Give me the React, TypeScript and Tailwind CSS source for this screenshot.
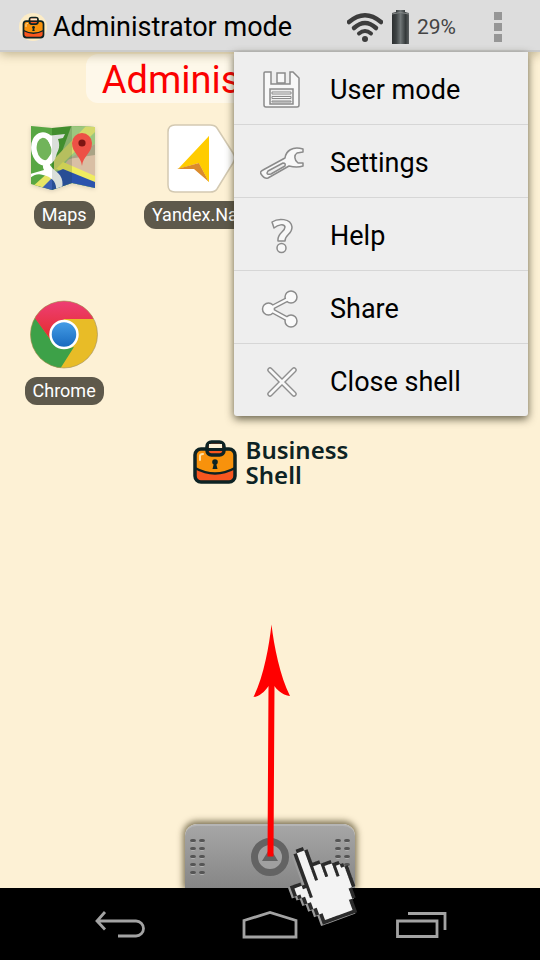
import React from "react";

const menuItems = [
  { label: "User mode", icon: <SaveIcon /> },
  { label: "Settings", icon: <WrenchIcon /> },
  { label: "Help", icon: <HelpIcon /> },
  { label: "Share", icon: <ShareIcon /> },
  { label: "Close shell", icon: <CloseIcon /> },
];

// # outline, o fill
const handPixels = [
  "     ##          ",
  "    #oo#         ",
  "    #oo#         ",
  "    #oo#         ",
  "    #oo#         ",
  "    #oo###       ",
  "    #oo#oo###    ",
  "    #oo#oo#oo##  ",
  "    #oo#oo#oo#o# ",
  "### #oo#oo#oo#oo#",
  "#oo##oooooooo#oo#",
  "#ooo#ooooooooooo#",
  " #oo#ooooooooooo#",
  "  #o#ooooooooooo#",
  "  #ooooooooooooo#",
  "   #ooooooooooo# ",
  "   #ooooooooooo# ",
  "    #oooooooooo# ",
  "    #ooooooooo#  ",
  "     #oooooooo#  ",
  "     #oooooooo#  ",
  "     ##########  ",
];

export default function App() {
  return (
    <div className="relative flex min-h-screen flex-col overflow-hidden bg-[#fdf1d5] font-['Roboto',sans-serif]">
      <Header />
      <main className="relative flex flex-1 flex-col">
        <h2 className="mx-auto mt-[2px] rounded-xl bg-white/50 px-4 pt-[3px] text-[38px] leading-[46px] whitespace-nowrap text-[#fb0000]">
          Administrator mode
        </h2>
        <div className="mt-[21px] grid grid-cols-4 gap-x-[9px] gap-y-[71px]">
          <Shortcut label="Maps" icon={<MapsIcon />} />
          <Shortcut label="Yandex.Navi" icon={<NaviIcon />} />
          <div className="col-span-2" />
          <Shortcut label="Chrome" icon={<ChromeIcon />} />
        </div>
        <div className="mt-8 flex items-center justify-center gap-2">
          <Briefcase className="h-[46px] w-[46px]" />
          <p className="font-['Noto_Sans',sans-serif] text-[24px] leading-[25px] font-semibold text-[#0d2324]">
            Business
            <br />
            Shell
          </p>
        </div>
        <Dock />
        <PopupMenu />
      </main>
      <NavBar />
      <SwipeHint />
    </div>
  );
}

function Header() {
  return (
    <header className="z-10 flex h-[52px] items-center border-b-2 border-[#cbcbcb] bg-[#dddddd] pt-1 pr-[38px] pl-[19px] shadow-[0_2px_10px_rgba(90,75,30,0.4)]">
      <span className="flex h-7 w-7 items-center justify-center rounded-full bg-[#fcecc6]">
        <Briefcase className="h-[23px] w-[23px]" />
      </span>
      <h1 className="ml-[6px] flex-1 text-[27px] leading-[32px] whitespace-nowrap text-black">
        Administrator mode
      </h1>
      <svg viewBox="0 0 36 30" className="h-[30px] w-9" fill="none" stroke="#3c3c3c">
        <path d="M2 10Q18-3.500 34 10" strokeWidth="4.500" strokeLinecap="round" />
        <path d="M7 16Q18 6 29 16" strokeWidth="4.500" strokeLinecap="round" />
        <path d="M12 21.500Q18 16.500 24 21.500" strokeWidth="4" strokeLinecap="round" />
        <circle cx="18" cy="27" r="3" fill="#3c3c3c" stroke="none" />
      </svg>
      <svg viewBox="0 0 19 34" className="ml-2 h-[34px] w-[19px]">
        <defs>
          <linearGradient id="battery">
            <stop offset="0" stopColor="#2c2f30" />
            <stop offset="0.250" stopColor="#3d4243" />
            <stop offset="0.500" stopColor="#707677" />
            <stop offset="0.800" stopColor="#34393a" />
            <stop offset="1" stopColor="#5c6061" />
          </linearGradient>
        </defs>
        <path d="M1 3L5 2V0H14V2L18 3V34H1Z" fill="url(#battery)" />
        <path d="M1 4Q9 1 18 4" stroke="#858989" fill="none" />
      </svg>
      <span className="ml-[7px] text-[21px] leading-6 text-[#444]">29%</span>
      <button aria-label="More options" className="ml-[38px] flex flex-col gap-[3px]">
        <span className="h-2 w-2 bg-[#969696]" />
        <span className="h-2 w-2 bg-[#969696]" />
        <span className="h-2 w-2 bg-[#969696]" />
      </button>
    </header>
  );
}

function PopupMenu() {
  return (
    <div className="absolute top-0 right-3 z-20 w-[294px] divide-y divide-[#d6d6d6] rounded-b-[3px] bg-[#eeeeee] shadow-[0_3px_9px_rgba(50,45,25,0.75)]">
      {menuItems.map((item) => (
        <button
          key={item.label}
          className="flex h-[73px] w-full items-center gap-[26px] pt-[3px] pl-[26px] text-left text-[27px] leading-8 text-black last:h-[72px]"
        >
          <span className="flex w-11 justify-center">{item.icon}</span>
          {item.label}
        </button>
      ))}
    </div>
  );
}

function Shortcut({ label, icon }: { label: string; icon: React.ReactNode }) {
  return (
    <button className="flex flex-col items-center gap-2">
      {icon}
      <span className="rounded-xl bg-[#5e594b] px-2 text-[18px] leading-7 whitespace-nowrap text-white">
        {label}
      </span>
    </button>
  );
}

function Dock() {
  return (
    <button
      aria-label="Open panel"
      className="mx-auto mt-auto flex h-[64px] w-[170px] items-center justify-between rounded-t-xl border-t-2 border-[#b5b5b5] bg-linear-to-b from-[#a6a6a6] to-[#868686] px-[5px] shadow-[0_-1px_6px_2px_rgba(60,50,20,0.65)]"
    >
      <Grip />
      <svg viewBox="0 0 40 40" className="h-10 w-10">
        <circle cx="20" cy="20" r="15.500" fill="#a0a0a0" stroke="#636363" strokeWidth="7" />
        <path d="M12 24L20 11L28 24Z" fill="#636363" />
      </svg>
      <Grip />
    </button>
  );
}

function Grip() {
  return (
    <span className="grid grid-cols-2 gap-x-[3px] gap-y-[4px]">
      {Array.from({ length: 10 }).map((_, i) => (
        <span key={i} className="h-[4px] w-[6px] rounded-xs border-b border-[#b0b0b0] bg-[#555]" />
      ))}
    </span>
  );
}

function NavBar() {
  return (
    <nav className="z-10 flex h-[72px] items-center justify-between bg-black px-[93px] pt-1">
      <button aria-label="Back">
        <svg viewBox="0 0 52 30" className="h-[30px] w-[52px]" fill="none" stroke="#a3a3a3" strokeWidth="2.800">
          <path d="M12 1L4 10L12 18.500M4 10H43A7.500 7.500 0 0 1 43 25H25" />
        </svg>
      </button>
      <button aria-label="Home">
        <svg viewBox="0 0 56 30" className="h-[30px] w-14" fill="none" stroke="#a3a3a3" strokeWidth="2.800">
          <path d="M2 9.500L28 1.500L54 9.500V26H2Z" />
        </svg>
      </button>
      <button aria-label="Recent apps">
        <svg viewBox="0 0 52 30" className="h-[30px] w-[52px]" fill="none" stroke="#a3a3a3" strokeWidth="2.800">
          <path d="M2.500 10H42V25.500H2.500ZM13 2.500H50V19" />
        </svg>
      </button>
    </nav>
  );
}

function SwipeHint() {
  return (
    <div className="pointer-events-none absolute inset-x-0 bottom-0 z-30 mx-auto h-[336px] w-[180px]">
      <svg viewBox="0 0 180 336" className="h-full w-full">
        <path d="M91.500 0.500C94 22 100 52 110 72C106 72 98 68 94.500 62L93.500 232.500H87.500L88.500 62C85 68 78 73 73.500 73C84 52 89 22 91.500 0.500Z" fill="#ff0000" />
        <g transform="translate(98.700 231.900) rotate(-20) scale(3.600)">
          <g transform="translate(-0.600 0.200)">
            <HandLayer chars="#o" fill="#9b9b9b" />
          </g>
          <HandLayer chars="o#" fill="#2b2b2b" />
          <HandLayer chars="o" fill="#f3f3f3" />
        </g>
      </svg>
    </div>
  );
}

function HandLayer({ chars, fill }: { chars: string; fill: string }) {
  let d = "";
  handPixels.forEach((row, y) => {
    row.split("").forEach((c, x) => {
      if (chars.includes(c)) d += `M${x} ${y}h1.150v1.150h-1.150z`;
    });
  });
  return <path d={d} fill={fill} />;
}

function Briefcase({ className }: { className: string }) {
  return (
    <svg viewBox="0 0 46 46" className={className}>
      <rect x="3" y="10" width="40" height="33" rx="6" fill="#f8920c" />
      <path d="M3 29Q23 40 43 29V38Q43 43 37 43H9Q3 43 3 38Z" fill="#f8561f" />
      <path d="M3 29Q23 40 43 29" stroke="#0d2324" strokeWidth="2.500" fill="none" />
      <rect x="3" y="10" width="40" height="33" rx="6" fill="none" stroke="#0d2324" strokeWidth="3.500" />
      <rect x="15" y="3" width="17" height="13" rx="4.500" fill="#f8561f" stroke="#0d2324" strokeWidth="3.500" />
      <rect x="17" y="5" width="13" height="4" fill="#fdf1d5" />
      <path d="M14 10.500H33" stroke="#0d2324" strokeWidth="3" />
      <path d="M8 21V17Q8 15 11 15" stroke="#ffe1a5" strokeWidth="2" fill="none" strokeLinecap="round" />
      <circle cx="23" cy="23" r="2.800" fill="#0d2324" />
      <path d="M22 24H24L25.500 30H20.500Z" fill="#0d2324" />
    </svg>
  );
}

function MapsIcon() {
  return (
    <svg viewBox="0 0 68 69" className="h-[69px] w-[68px] drop-shadow-sm">
      <defs>
        <clipPath id="sheet">
          <path d="M1 2L22 4L42 2L65 3V64L42 59L22 66L1 60Z" />
        </clipPath>
      </defs>
      <g clipPath="url(#sheet)">
        <path d="M0 0H68V69H0Z" fill="#4a9f33" />
        <path d="M42 0H68V69H42L24 50Z" fill="#9cc77f" />
        <path d="M38 36L65 20V62L30 46Z" fill="#d9bfa4" />
        <path d="M38 35L65 20V31Z" fill="#aaa486" />
        <path d="M24 48L65 8V0H58L24 35Z" fill="#d4d96c" />
        <path d="M33 38L65 52V60L26 45Z" fill="#f0ec60" />
        <path d="M0 69L24 49L33 45L65 58V69Z" fill="#2b53ad" />
        <path d="M1 64L21 46L27 49L10 66Z" fill="#e4e35a" />
        <ellipse cx="14" cy="25" rx="10" ry="14" fill="#65ae4c" stroke="#fff" strokeWidth="5.500" transform="rotate(-10 14 25)" />
        <path d="M16 12L35 10L33 14L28 15C32 26 25 32 21 36C17 41 23 44 28 49C33 54 33 59 32 65L26 67C27 58 22 53 13 51C8 49 4 51 0 54V50L14 46C12 43 13 40 16 37L23 27Z" fill="#fff" />
        <path d="M1 0L22 2V69L1 62Z" fill="#fff" opacity="0.080" />
        <path d="M22 0H42V69H22Z" fill="#183818" opacity="0.160" />
      </g>
      <path d="M52 42C51 32 42 29 42 19A10 10 0 0 1 62 19C62 29 53 32 52 42Z" fill="#ed5146" />
      <circle cx="52" cy="19" r="3.600" fill="#7d1512" />
    </svg>
  );
}

function NaviIcon() {
  return (
    <svg viewBox="0 0 68 69" className="h-[69px] w-[68px]">
      <path d="M8 1H43Q48 1 50 4L66 29Q69 34 66 39L50 65Q48 68 43 68H8Q1 68 1 61V8Q1 1 8 1Z" fill="#fff" stroke="#d3c9b2" strokeWidth="1.500" />
      <path d="M42 12V58L32 39L11 45Z" fill="#ffcc00" />
      <path d="M42 58L32 39L10 45L27 45Z" fill="#db8b2c" />
      <path d="M42 12V58L32 39Z" fill="#ffcc00" />
    </svg>
  );
}

function ChromeIcon() {
  return (
    <svg viewBox="0 0 68 69" className="h-[69px] w-[68px]">
      <defs>
        <linearGradient id="red" x2="0" y2="1">
          <stop offset="0" stopColor="#ee3f77" />
          <stop offset="1" stopColor="#e52c2c" />
        </linearGradient>
        <linearGradient id="blue" x2="0" y2="1">
          <stop offset="0" stopColor="#479fe8" />
          <stop offset="1" stopColor="#1668bd" />
        </linearGradient>
        <clipPath id="disc">
          <circle cx="34" cy="34.500" r="33.500" />
        </clipPath>
      </defs>
      <g clipPath="url(#disc)">
        <path d="M0 0H68V69H0Z" fill="#e8bc27" />
        <path d="M0 10L20 39L34 49L44 47L30 69H0Z" fill="#3da148" />
        <path d="M4 17L0 0H68V19H34L20 39Z" fill="url(#red)" />
      </g>
      <circle cx="34" cy="34.500" r="33.500" fill="none" stroke="#9e8d60" strokeOpacity="0.600" />
      <circle cx="34" cy="34.500" r="13.500" fill="url(#blue)" stroke="#fff" strokeWidth="2.500" />
    </svg>
  );
}

function SaveIcon() {
  return (
    <svg viewBox="0 0 38 38" className="h-[38px] w-[38px]" fill="#f8f8f8" stroke="#8b8b8b" strokeWidth="1.500">
      <path d="M2 1H8V13H27V1H30L36 7V34Q36 36 34 36H3Q1 36 1 34V2Q1 1 2 1Z" />
      <path d="M14 2H22V12H14Z" />
      <path d="M7 18H30V33H7Z" fill="#eee" />
      <path d="M9 21H28V23H9ZM9 25.500H28V27.500H9ZM9 30H28V31H9Z" strokeWidth="1" />
    </svg>
  );
}

function WrenchIcon() {
  return (
    <svg viewBox="0 0 44 34" className="h-[34px] w-11" fill="#f8f8f8" stroke="#8b8b8b" strokeWidth="1.500" strokeLinejoin="round">
      <path d="M3 24L25 12C26 5 32 0 43 3V6L37 7C34 9 34 14 38 17L43 17V20C37 22 33 21 29 20L8 32C5 33 3 31 1 28C0 26 1 25 3 24Z" />
      <path d="M8 25L23 17Q26 17 25 20L11 28Q7 29 7 27Z" fill="#eee" />
    </svg>
  );
}

function HelpIcon() {
  return (
    <svg viewBox="0 0 22 36" className="h-9 w-[22px]" fill="#f8f8f8" stroke="#8b8b8b" strokeWidth="1.500" strokeLinejoin="round">
      <path d="M1 4C7 0 20 0 21 9C21 17 14 16 14 23H7C6 15 14 14 14 9C13 5 7 7 3 10Z" />
      <circle cx="10.500" cy="30" r="4.500" />
    </svg>
  );
}

function ShareIcon() {
  return (
    <svg viewBox="0 0 38 38" className="-ml-1 h-[38px] w-[38px]">
      <path d="M30 7.500L8 19L30 31" stroke="#8b8b8b" strokeWidth="5" fill="none" />
      <g fill="#fafafa" stroke="#8b8b8b" strokeWidth="1.500">
        <circle cx="7.500" cy="19" r="6" />
        <circle cx="30" cy="7" r="6" />
        <circle cx="30" cy="31" r="6" />
      </g>
      <path d="M30 7.500L8 19L30 31" stroke="#fafafa" strokeWidth="2.500" fill="none" />
    </svg>
  );
}

function CloseIcon() {
  return (
    <svg viewBox="0 0 30 30" className="h-[30px] w-[30px]" strokeLinecap="round">
      <path d="M3 3L27 27M27 3L3 27" stroke="#8f8f8f" strokeWidth="5.500" />
      <path d="M3 3L27 27M27 3L3 27" stroke="#f8f8f8" strokeWidth="2.800" />
    </svg>
  );
}
